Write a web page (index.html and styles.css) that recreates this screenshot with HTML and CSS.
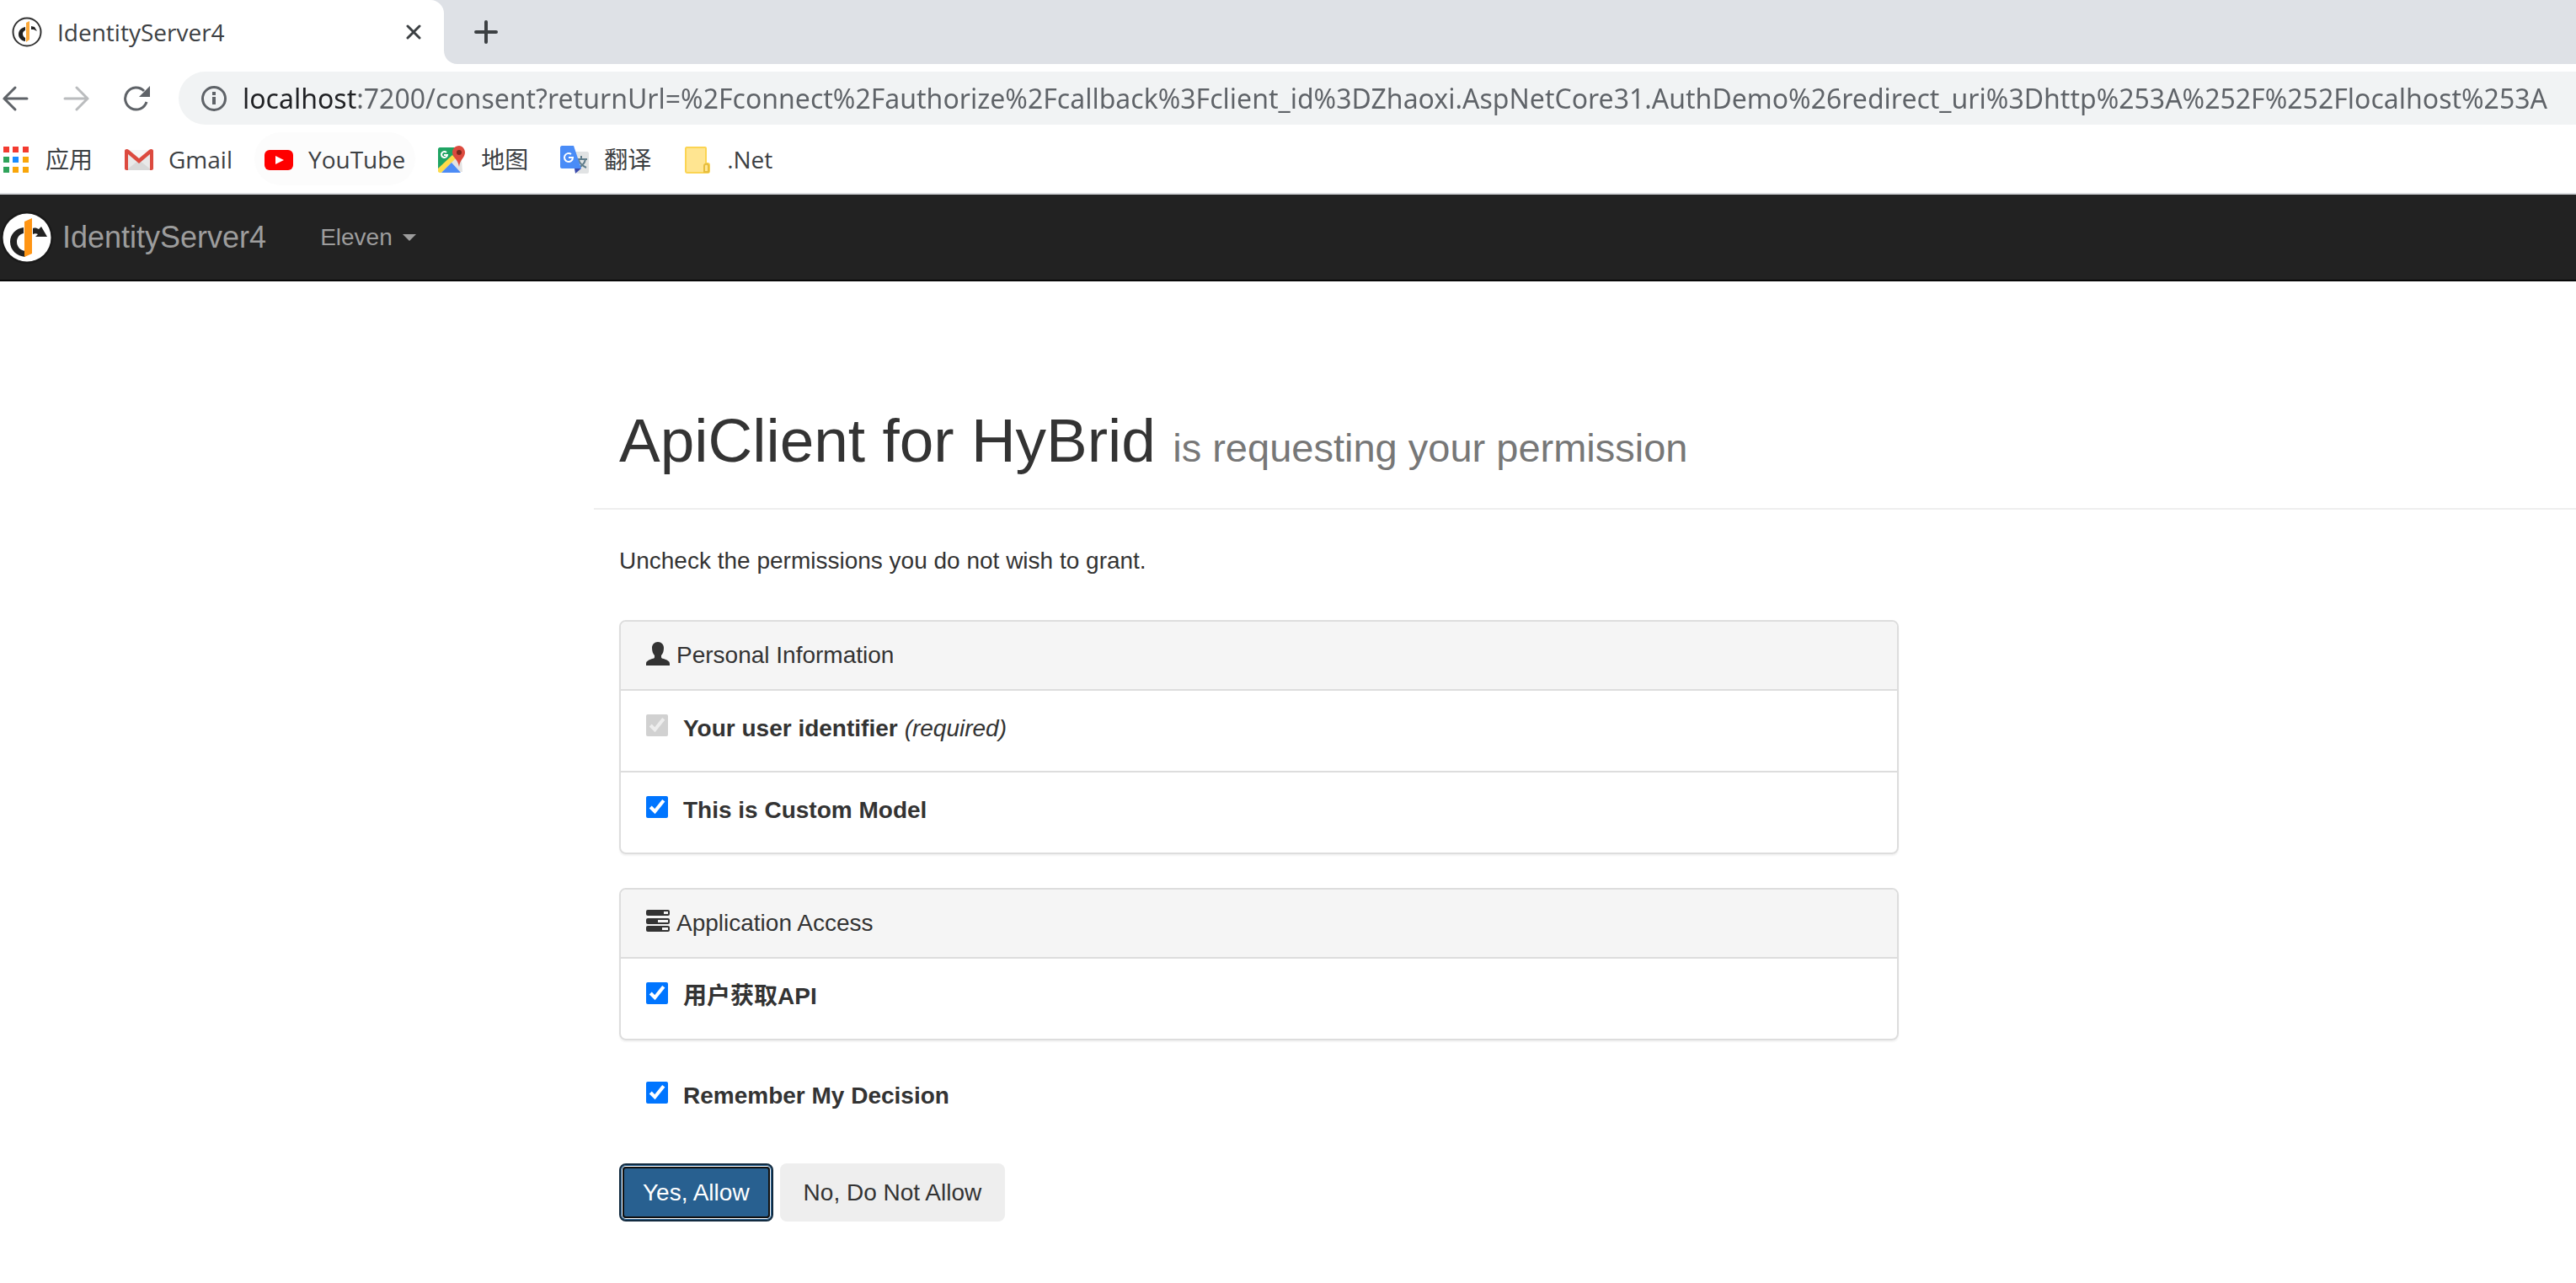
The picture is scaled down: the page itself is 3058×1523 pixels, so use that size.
FILE: index.html
```html
<!DOCTYPE html>
<html lang="en">
<head>
<meta charset="utf-8">
<title>IdentityServer4</title>
<link rel="stylesheet" href="styles.css">
</head>
<body>
<svg class="defs" aria-hidden="true">
  <symbol id="logo" viewBox="0 0 64 64">
    <circle cx="32" cy="32" r="31" fill="#1a1a1a"/>
    <circle cx="32" cy="32" r="28.500" fill="#fff"/>
    <path d="M28 20c-9 1-16 8-16 17 0 10 8 17 18 18v-7c-6-1-10-5-10-11 0-5 3-9 8-10z" fill="#222"/>
    <path d="M39 21c3-1 5 0 7 1l3-3 7 12-14 0 3-3c-2-1-4-1-6 0z" fill="#222"/>
    <path d="M29 13l9-4v42l-9 4z" fill="#ff9514"/>
  </symbol>
</svg>

<header class="browser">
  <div class="tab-strip">
    <div class="tab">
      <svg class="favicon" viewBox="0 0 36 36" aria-hidden="true">
        <circle cx="18" cy="18" r="16.500" fill="#fff" stroke="#333" stroke-width="2"/>
        <path d="M16 12c-5 1-8 4-8 9 0 4 4 8 8 8v-4c-2-1-3-3-3-5s1-3 3-4z" fill="#222"/>
        <path d="M23 11l4 1 3 5-4-2h-3z" fill="#222"/>
        <path d="M17 7l4-2v22l-4 3z" fill="#fca93a"/>
      </svg>
      <span class="tab-title">IdentityServer4</span>
      <button class="icon-button" aria-label="Close tab"><svg width="18" height="18" viewBox="0 0 18 18"><path d="M2 2l14 14M16 2L2 16" stroke="#3c4043" stroke-width="3" stroke-linecap="round"/></svg></button>
    </div>
    <svg class="tab-curve" width="16" height="16" viewBox="0 0 16 16" aria-hidden="true"><path d="M0 0v16h16C7 16 0 9 0 0z" fill="#fff"/></svg>
    <button class="icon-button new-tab" aria-label="New tab"><svg width="28" height="28" viewBox="0 0 28 28"><path d="M14 2v24M2 14h24" stroke="#3c4043" stroke-width="4" stroke-linecap="round"/></svg></button>
  </div>

  <div class="toolbar">
    <button class="icon-button" aria-label="Back"><svg width="32" height="32" viewBox="0 0 32 32" fill="none" stroke="#5f6368" stroke-width="3" stroke-linecap="round"><path d="M30 16H3M16 3L3 16l13 13"/></svg></button>
    <button class="icon-button" aria-label="Forward"><svg width="32" height="32" viewBox="0 0 32 32" fill="none" stroke="#babcbe" stroke-width="3" stroke-linecap="round"><path d="M3 16h27M17 3l13 13-13 13"/></svg></button>
    <button class="icon-button" aria-label="Reload"><svg width="32" height="32" viewBox="0 0 32 32"><path d="M28 20A13 13 0 1 1 25 7" fill="none" stroke="#5f6368" stroke-width="3"/><path d="M32 1v13H19z" fill="#5f6368"/></svg></button>
    <div class="address">
      <svg width="32" height="32" viewBox="0 0 32 32" aria-hidden="true"><circle cx="16" cy="16" r="13.500" fill="none" stroke="#5f6368" stroke-width="3"/><path d="M14 14h4v9h-4zM14 8h4v4h-4z" fill="#5f6368"/></svg>
      <input class="url" type="text" aria-label="Address" spellcheck="false" value="localhost:7200/consent?returnUrl=%2Fconnect%2Fauthorize%2Fcallback%3Fclient_id%3DZhaoxi.AspNetCore31.AuthDemo%26redirect_uri%3Dhttp%253A%252F%252Flocalhost%253A">
    </div>
  </div>

  <nav class="bookmarks" aria-label="Bookmarks">
    <a class="bookmark" href="#"><svg viewBox="0 0 34 34"><path d="M2 2h7v7H2zM13 2h7v7h-7zM25 2h7v7h-7z" fill="#f33b30"/><path d="M2 14h7v7H2zM2 26h7v7H2z" fill="#2fa35a"/><path d="M13 14h7v7h-7z" fill="#1a8cff"/><path d="M25 14h7v7h-7zM13 26h7v7h-7zM25 26h7v7h-7z" fill="#f9a60a"/></svg>应用</a>
    <a class="bookmark" href="#"><svg viewBox="0 0 34 34"><path d="M2 6h30v24H2z" fill="#e9e9e9"/><path d="M2 30l15-12 15 12z" fill="#d8d8d8"/><path d="M4 6h26L17 18z" fill="#f6f6f6"/><path d="M0 7c0-2 3-3 5-1l12 10L29 6c2-2 5-1 5 1v21c0 1-1 2-2 2h-2V11L17 22 4 11v19H2c-1 0-2-1-2-2z" fill="#dc4a3f"/></svg>Gmail</a>
    <a class="bookmark hover" href="#"><svg viewBox="0 0 34 34"><rect y="6" width="34" height="24" rx="6" fill="#f00"/><path d="M13 13l10 5-10 5z" fill="#fff"/></svg>YouTube</a>
    <a class="bookmark" href="#"><svg viewBox="0 0 34 34"><path d="M2 4h26l2 28H2z" fill="#e3e3e3"/><path d="M3 3h21l-3 11L3 32c-1 0-2-1-2-2V5c0-1 1-2 2-2z" fill="#1fa463"/><path d="M1 28l17-16 4 4L5 33H3c-1 0-2-1-2-2z" fill="#fedb4a"/><path d="M5 33l12-12 11 12z" fill="#4c8bf5"/><path d="M26 1c-5 0-8 4-8 8 0 6 7 8 8 17 1-9 7-11 7-17 0-4-3-8-7-8z" fill="#dc4a3e"/><circle cx="26" cy="9" r="3" fill="#7c271c"/><path d="M11 9a3.500 3.500 0 1 0 1 3H8" fill="none" stroke="#fff" stroke-width="2"/></svg>地图</a>
    <a class="bookmark" href="#"><svg viewBox="0 0 34 34"><path d="M14 8h18c1 0 2 1 2 2v22c0 1-1 2-2 2H20z" fill="#e1e3e4"/><path d="M20 17h12M25 13v4M30 17c-1 5-4 8-8 10M22 18c1 4 5 7 9 9" stroke="#607d8b" stroke-width="2" fill="none"/><path d="M17 28h8l-7 6z" fill="#3949ab"/><path d="M2 1h14l9 27H2c-1 0-2-1-2-2V3c0-1 1-2 2-2z" fill="#4a8cf7"/><path d="M13 11a5 5 0 1 0 2 4h-5" fill="none" stroke="#fff" stroke-width="2"/></svg>翻译</a>
    <a class="bookmark" href="#"><svg viewBox="0 0 34 34"><path d="M4 3h22c1 0 1 0 1 1v18h2c1 0 2 1 2 2v7c0 1-1 2-2 2H5c-1 0-2-1-2-2V4z" fill="#ffe591" stroke="#fbd452" stroke-width="2"/><path d="M25 32v-7c0-3 5-3 5 0v7z" fill="#ffe591" stroke="#e6bd3e" stroke-width="2"/></svg>.Net</a>
  </nav>
</header>

<nav class="navbar" aria-label="Main">
  <a class="brand" href="#"><svg width="64" height="64" aria-hidden="true"><use href="#logo"/></svg>IdentityServer4</a>
  <button class="user-menu" aria-haspopup="true">Eleven<span class="caret"></span></button>
</nav>

<main class="container">
  <div class="page-header">
    <h1>ApiClient for HyBrid <small>is requesting your permission</small></h1>
  </div>
  <form class="consent">
    <p class="hint">Uncheck the permissions you do not wish to grant.</p>

    <section class="panel">
      <h2 class="panel-heading"><svg width="28" height="28" viewBox="0 0 28 28" aria-hidden="true"><path d="M14 0c4 0 7 3 7 7 0 4-1 7-3 9v2c0 1 1 2 3 2 5 2 7 3 7 6v2H0v-2c0-3 2-4 7-6 2 0 3-1 3-2v-2C8 14 7 11 7 7c0-4 3-7 7-7z" fill="#333"/></svg>Personal Information</h2>
      <ul class="list">
        <li><label class="option"><input type="checkbox" checked disabled><strong>Your user identifier</strong> <em>(required)</em></label></li>
        <li><label class="option"><input type="checkbox" checked><strong>This is Custom Model</strong></label></li>
      </ul>
    </section>

    <section class="panel">
      <h2 class="panel-heading"><svg width="28" height="28" viewBox="0 0 28 28" aria-hidden="true"><g fill="#333"><rect width="28" height="7" rx="2"/><rect y="10" width="28" height="7" rx="2"/><rect y="19" width="28" height="7" rx="2"/></g><path d="M21 2h5v3h-5zM14 12h12v3H14zM19 21h7v3h-7z" fill="#f5f5f5"/></svg>Application Access</h2>
      <ul class="list">
        <li><label class="option"><input type="checkbox" checked><strong>用户获取API</strong></label></li>
      </ul>
    </section>

    <label class="option remember"><input type="checkbox" checked><strong>Remember My Decision</strong></label>

    <div class="actions">
      <button type="button" class="btn btn-primary">Yes, Allow</button>
      <button type="button" class="btn">No, Do Not Allow</button>
    </div>
  </form>
</main>
</body>
</html>
```
FILE: styles.css
```css
* { box-sizing: border-box; }

body {
  margin: 0;
  background: #fff;
  color: #333;
  font-family: "Liberation Sans", "Noto Sans CJK SC", sans-serif;
  font-size: 28px;
  line-height: 40px;
  overflow-x: hidden;
}

button, input { font: inherit; }
.defs { position: absolute; width: 0; height: 0; }

/* Browser chrome */
.browser {
  font-family: "Open Sans", "Noto Sans CJK SC", sans-serif;
  color: #3c4043;
  border-bottom: 2px solid #dadce0;
}

.icon-button {
  display: flex;
  padding: 0;
  border: 0;
  background: none;
}

.tab-strip {
  display: flex;
  align-items: center;
  height: 76px;
  background: #dee1e6;
}

.tab {
  display: flex;
  align-items: center;
  width: 527px;
  height: 76px;
  padding: 0 27px 0 14px;
  background: #fff;
  border-top-right-radius: 16px;
}

.favicon { width: 36px; height: 36px; }
.tab-title { flex: 1; padding-left: 18px; }
.tab-curve { align-self: flex-end; }
.new-tab { margin-left: 20px; }

.toolbar {
  display: flex;
  align-items: center;
  gap: 40px;
  height: 81px;
  padding-left: 2px;
}

.address {
  display: flex;
  flex: 1;
  align-items: center;
  gap: 18px;
  min-width: 0;
  height: 63px;
  margin-left: -6px;
  padding-left: 26px;
  border-radius: 32px 0 0 32px;
  background: #f1f3f4;
}

.address svg { flex: none; }

/* The host name is drawn darker than the rest of the address. */
.url {
  flex: 1;
  min-width: 0;
  height: 56px;
  padding: 0;
  border: 0;
  outline: 0;
  font-family: "Noto Sans", sans-serif;
  font-size: 32px;
  color: #5f6368;
  background: linear-gradient(90deg, #202124 136px, #5f6368 136px);
  -webkit-background-clip: text;
  background-clip: text;
  -webkit-text-fill-color: transparent;
}

.bookmarks {
  display: flex;
  gap: 14px;
  height: 72px;
  margin-left: -10px;
}

.bookmark {
  display: flex;
  align-items: center;
  gap: 18px;
  height: 63px;
  padding: 0 12px;
  border-radius: 32px;
  color: #3c4043;
  text-decoration: none;
}

.bookmark svg { width: 34px; height: 34px; }
.bookmark.hover { background: #fcfcfc; }

/* Site navigation */
.navbar {
  display: flex;
  align-items: center;
  gap: 64px;
  height: 103px;
  border-bottom: 2px solid #080808;
  background: #222;
}

.brand {
  display: flex;
  align-items: center;
  gap: 10px;
  color: #9d9d9d;
  font-size: 36px;
  text-decoration: none;
}

.user-menu {
  display: flex;
  align-items: center;
  gap: 12px;
  padding: 0;
  border: 0;
  background: none;
  color: #9d9d9d;
}

.caret {
  border-top: 8px solid;
  border-right: 8px solid transparent;
  border-left: 8px solid transparent;
}

/* Consent page */
.container { padding: 145px 0 72px 705px; }

.page-header {
  padding: 0 30px 36px;
  border-bottom: 2px solid #eee;
}

h1 {
  margin: 0;
  font-size: 73px;
  font-weight: 400;
  line-height: 88px;
}

h1 small { color: #777; font-size: 47px; line-height: 1; }

.consent { width: 67%; padding: 41px 28px 0 30px; }
.hint { margin: 0 0 50px; }

.panel {
  margin-bottom: 40px;
  border: 2px solid #ddd;
  border-radius: 8px;
  box-shadow: 0 2px 2px rgba(0, 0, 0, .05);
}

.panel-heading {
  display: flex;
  align-items: center;
  gap: 8px;
  height: 80px;
  margin: 0;
  padding: 0 30px;
  border-radius: 6px 6px 0 0;
  background: #f5f5f5;
  font-size: 28px;
  font-weight: 400;
}

.panel-heading svg { margin-bottom: 4px; }

.list { margin: 0; padding: 0; list-style: none; }
.list li { padding: 25px 30px 30px; border-top: 2px solid #ddd; }

.option { display: flex; gap: 8px; }
.option input { width: 26px; height: 26px; margin: 3px 10px 0 0; }

.remember { padding: 6px 32px 0; }
.actions { display: flex; gap: 8px; margin-top: 60px; }

.btn {
  height: 69px;
  padding: 0 26px;
  border: 2px solid transparent;
  border-radius: 8px;
  background: #eee;
  color: #333;
}

.btn-primary {
  border-color: #122b40;
  background: #286090;
  color: #fff;
  outline: 2px solid #101010;
  outline-offset: -6px;
  box-shadow: inset 0 0 0 1px #286090, inset 0 0 0 2px #fff;
}
```
